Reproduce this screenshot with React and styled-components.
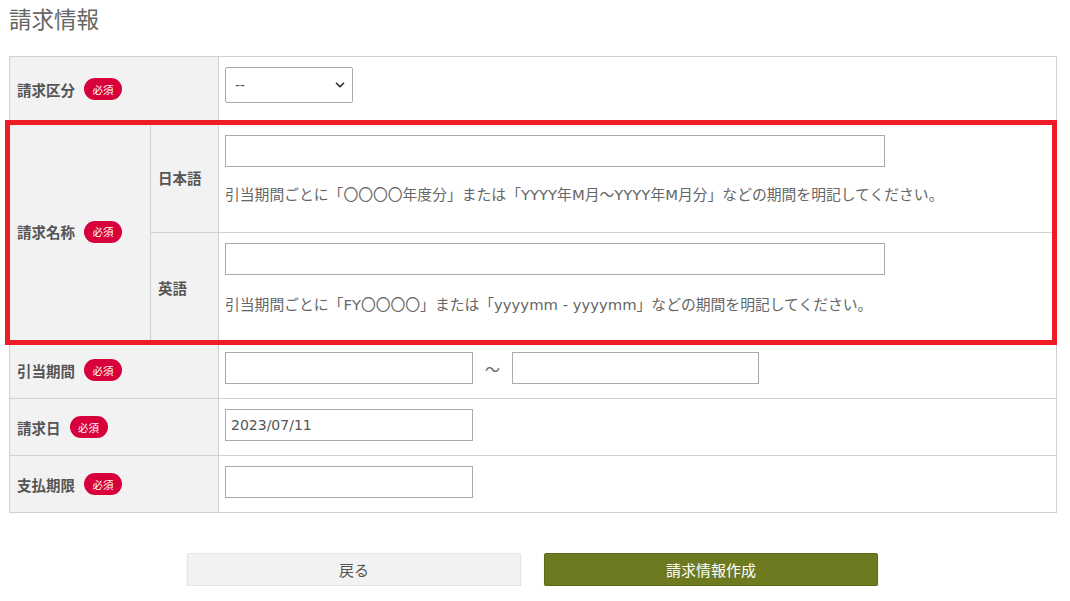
import React from "react";
import styled, { createGlobalStyle } from "styled-components";
import { ChevronDown } from "lucide-react";

const GlobalStyle = createGlobalStyle`
  html, body {
    margin: 0;
    padding: 0;
    background: #fff;
  }
  body {
    font-family: "Noto Sans CJK JP", "Noto Sans", sans-serif;
    color: #555;
  }
  * {
    box-sizing: border-box;
  }
`;

// latin glyphs in the original are Verdana-like, DejaVu Sans is the closest
const mixedFont = `"DejaVu Sans", "Noto Sans CJK JP", sans-serif`;

const Page = styled.div`
  width: 1070px;
  padding: 0 13px 0 9px;
`;

const Title = styled.h2`
  margin: 0;
  padding-top: 2px;
  height: 56px;
  font-size: 22.5px;
  line-height: 32px;
  font-weight: 400;
  color: #666;
`;

const Table = styled.div`
  border: 1px solid #d0d0d0;
  border-bottom: none;
`;

const Row = styled.div`
  display: flex;
  border-bottom: 1px solid #d0d0d0;
  min-height: ${(p) => p.$h || 57}px;
`;

const GroupRow = styled(Row)`
  position: relative;

  &::after {
    content: "";
    position: absolute;
    top: -2px;
    left: -5px;
    right: -1px;
    bottom: -4px;
    border: 5px solid #ee1c25;
    pointer-events: none;
  }
`;

const Label = styled.div`
  width: ${(p) => p.$w || 209}px;
  flex: none;
  display: flex;
  align-items: center;
  padding-left: 7px;
  background: #f2f2f2;
  border-right: 1px solid #d0d0d0;
  font-size: 14.5px;
  font-weight: 700;
  color: #555;
`;

const Badge = styled.span`
  display: inline-flex;
  align-items: center;
  justify-content: center;
  width: 38px;
  height: 22px;
  margin-left: 9px;
  border-radius: 11px;
  background: #d7003a;
  color: #fff;
  font-size: 10.5px;
  font-weight: 400;
`;

const SubRows = styled.div`
  flex: 1;
  display: flex;
  flex-direction: column;
`;

const SubRow = styled.div`
  display: flex;
  min-height: ${(p) => p.$h}px;
  & + & {
    border-top: 1px solid #d0d0d0;
  }
`;

const Field = styled.div`
  flex: 1;
  padding: ${(p) => p.$pt || 10}px 6px 0;
  display: flex;
  flex-direction: column;
  align-items: flex-start;
`;

const Inline = styled.div`
  display: flex;
  align-items: center;
`;

const TextInput = styled.input`
  width: ${(p) => p.$w || 248}px;
  height: 32px;
  border: 1px solid #aaa;
  border-radius: 0;
  padding: 0 5px;
  font-family: ${mixedFont};
  font-size: 14px;
  color: #555;
  outline: none;
  background: #fff;
`;

const Tilde = styled.span`
  width: 39px;
  text-align: center;
  font-size: 15px;
  color: #666;
`;

const SelectWrap = styled.div`
  position: relative;
  width: 128px;
  height: 36px;
`;

const Select = styled.select`
  appearance: none;
  width: 100%;
  height: 100%;
  border: 1px solid #aaa;
  border-radius: 2px;
  background: #fff;
  padding: 0 9px;
  font-family: ${mixedFont};
  font-size: 14px;
  color: #555;
  outline: none;
`;

const Caret = styled(ChevronDown)`
  position: absolute;
  right: 6px;
  top: 11px;
  color: #333;
  pointer-events: none;
`;

const Note = styled.p`
  margin: ${(p) => p.$mt}px 0 0;
  font-family: ${mixedFont};
  font-size: 14.8px;
  line-height: 20px;
  color: #666;
  white-space: nowrap;
`;

const Buttons = styled.div`
  display: flex;
  justify-content: center;
  gap: 23px;
  margin-top: 40px;
  padding-right: 1px;
`;

const Button = styled.button`
  width: 334px;
  height: 33px;
  border: 1px solid ${(p) => (p.$primary ? "#5f6a18" : "#e6e6e6")};
  border-radius: 2px;
  background: ${(p) => (p.$primary ? "#6e7a20" : "#f2f2f2")};
  box-shadow: 0 1px 1px rgba(0, 0, 0, 0.25);
  color: ${(p) => (p.$primary ? "#fff" : "#555")};
  font-family: "Noto Sans CJK JP", sans-serif;
  font-size: 15px;
  cursor: pointer;
`;

const Required = () => <Badge>必須</Badge>;

export default function App() {
  return (
    <Page>
      <GlobalStyle />
      <Title>請求情報</Title>
      <Table>
        <Row $h={65}>
          <Label>
            請求区分
            <Required />
          </Label>
          <Field>
            <SelectWrap>
              <Select defaultValue="">
                <option value="">--</option>
              </Select>
              <Caret size={14} strokeWidth={3} />
            </SelectWrap>
          </Field>
        </Row>
        <GroupRow>
          <Label $w={141}>
            請求名称
            <Required />
          </Label>
          <SubRows>
            <SubRow $h={110}>
              <Label $w={68}>日本語</Label>
              <Field $pt={13}>
                <TextInput $w={660} />
                <Note $mt={18}>
                  引当期間ごとに「〇〇〇〇年度分」または「YYYY年M月～YYYY年M月分」などの期間を明記してください。
                </Note>
              </Field>
            </SubRow>
            <SubRow $h={109}>
              <Label $w={68}>英語</Label>
              <Field $pt={10}>
                <TextInput $w={660} />
                <Note $mt={20}>
                  引当期間ごとに「FY〇〇〇〇」または「yyyymm - yyyymm」などの期間を明記してください。
                </Note>
              </Field>
            </SubRow>
          </SubRows>
        </GroupRow>
        <Row>
          <Label>
            引当期間
            <Required />
          </Label>
          <Field>
            <Inline>
              <TextInput />
              <Tilde>～</Tilde>
              <TextInput $w={247} />
            </Inline>
          </Field>
        </Row>
        <Row>
          <Label>
            請求日
            <Required />
          </Label>
          <Field>
            <TextInput defaultValue="2023/07/11" />
          </Field>
        </Row>
        <Row>
          <Label>
            支払期限
            <Required />
          </Label>
          <Field>
            <TextInput />
          </Field>
        </Row>
      </Table>
      <Buttons>
        <Button>戻る</Button>
        <Button $primary>請求情報作成</Button>
      </Buttons>
    </Page>
  );
}
